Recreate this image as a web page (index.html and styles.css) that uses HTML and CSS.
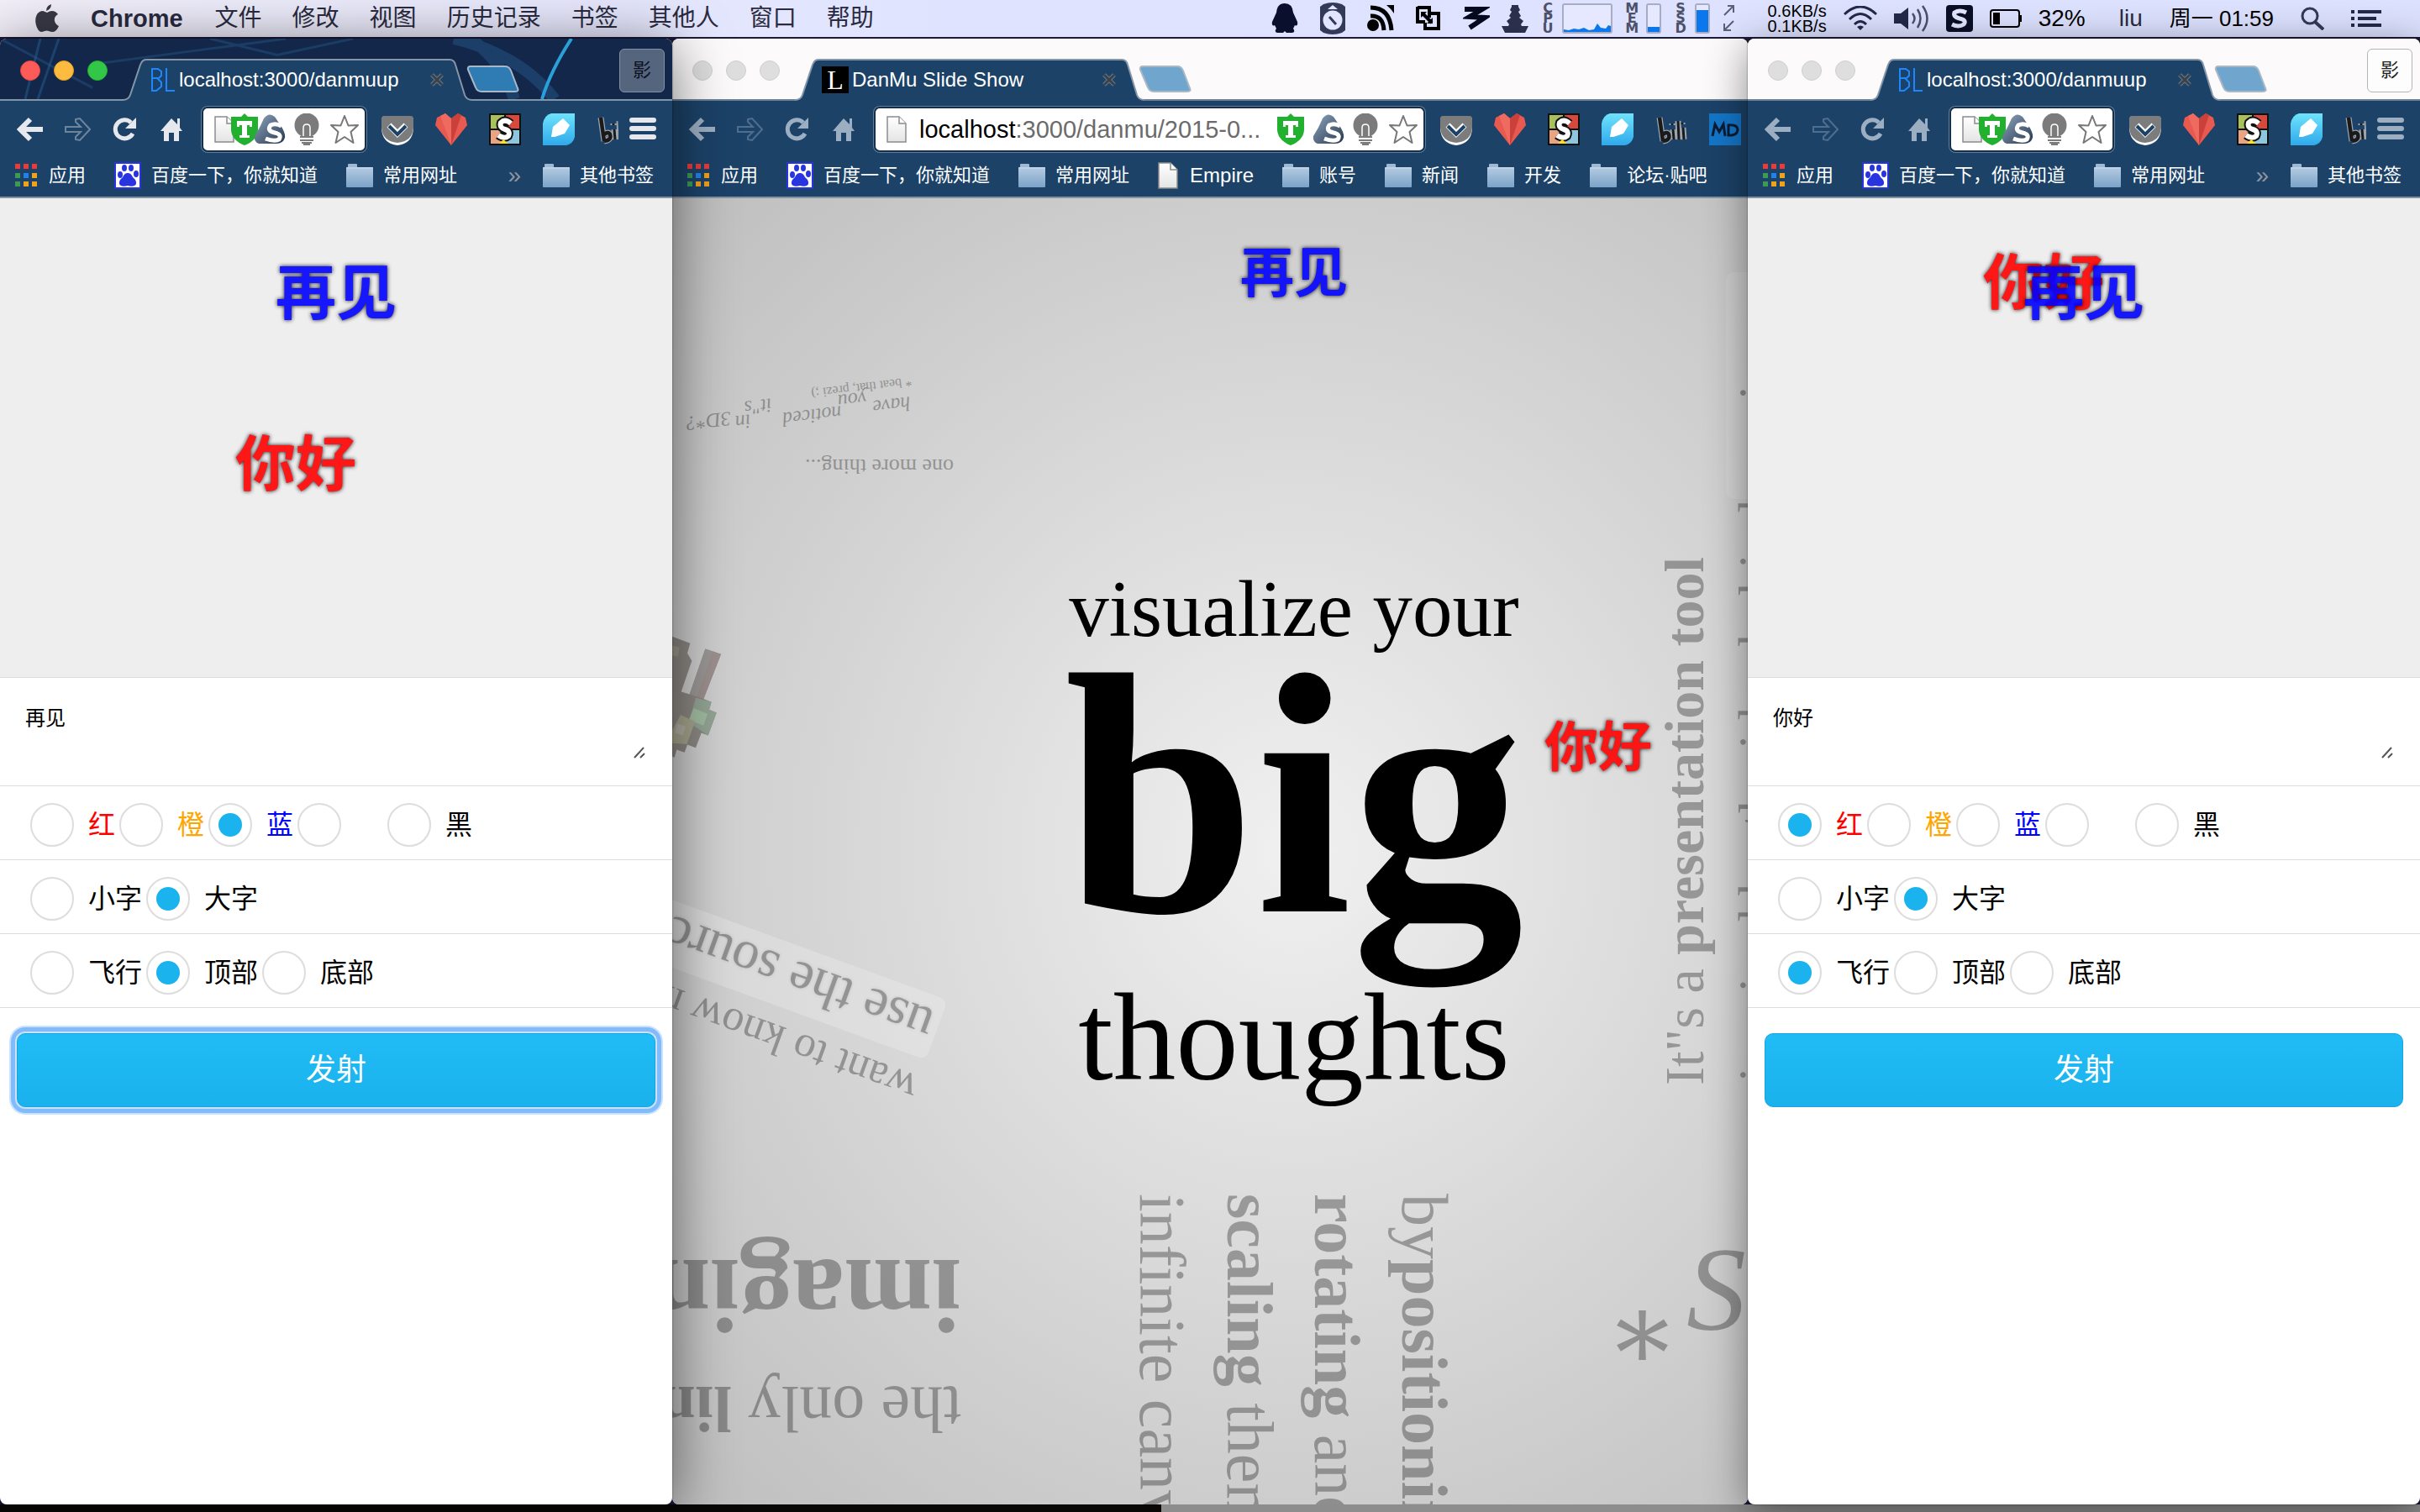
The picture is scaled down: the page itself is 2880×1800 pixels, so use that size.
FILE: index.html
```html
<!DOCTYPE html>
<html lang="zh-CN">
<head>
<meta charset="utf-8">
<title>DanMu Slide Show</title>
<link rel="stylesheet" href="styles.css">
</head>
<body>
<svg class="sprite" aria-hidden="true">
  <defs>
    <linearGradient id="folderFill" x1="0" y1="0" x2="0" y2="1"><stop offset="0" stop-color="#b4cbe2"/><stop offset="1" stop-color="#7ba3c8"/></linearGradient>
    <linearGradient id="featherFill" x1="0" y1="0" x2="0" y2="1"><stop offset="0" stop-color="#6fe3fb"/><stop offset="1" stop-color="#2fa9ec"/></linearGradient>
    <linearGradient id="sogouFill" x1="0" y1="0" x2="1" y2="1"><stop offset="0" stop-color="#8fa6bf"/><stop offset="1" stop-color="#26384e"/></linearGradient>
    <linearGradient id="pageFill" x1="0" y1="0" x2="0" y2="1"><stop offset="0" stop-color="#fff"/><stop offset="1" stop-color="#e4e4e4"/></linearGradient>
  </defs>
  <symbol id="tab" viewBox="0 0 416 50"><path d="M0 49C6 49 8 46 9 43L21 7C23 2 25 1 29 1H389C393 1 395 3 396 7L407 43C408 46 410 49 416 49V50H0Z" fill="#1c4268"/><path d="M0 49C6 49 8 46 9 43L21 7C23 2 25 1 29 1H389C393 1 395 3 396 7L407 43C408 46 410 49 416 49" fill="none" stroke="#8496a8" stroke-width="2"/></symbol>
  <symbol id="newtab" viewBox="0 0 64 32"><path d="M5 1H46Q51 1 53 6L61 27Q63 31 58 31H18Q13 31 11 26L2 5Q1 1 5 1Z" fill="currentColor" stroke="#a9b8c4" stroke-width="2"/></symbol>
  <symbol id="bl" viewBox="0 0 28 28"><path d="M1 1H8L12 4V9L8 13L12 17V22L6 27H1ZM1 12H8M18 0V27H28" fill="none" stroke="#1e86ff" stroke-width="2"/></symbol>
  <symbol id="close" viewBox="0 0 18 18"><path d="M3 3L15 15M15 3L3 15" stroke="#6d7a88" stroke-width="5"/><path d="M3 3L15 15M15 3L3 15" stroke="#39424c" stroke-width="3"/></symbol>
  <symbol id="back" viewBox="0 0 32 32"><path d="M16 4L4 16L16 28M5 16H31" fill="none" stroke="currentColor" stroke-width="6"/></symbol>
  <symbol id="fwd" viewBox="0 0 32 32"><path d="M14 4L19 3L31 16L19 29L14 28V25L20 19H2V13H20L14 7Z" fill="none" stroke="currentColor" stroke-width="2"/></symbol>
  <symbol id="reload" viewBox="0 0 32 32"><path d="M26 21A11 11 0 1 1 24 8" fill="none" stroke="currentColor" stroke-width="5"/><path d="M30 2V15H17Z" fill="currentColor"/></symbol>
  <symbol id="home" viewBox="0 0 32 32"><path d="M16 3L3 18H7V30H13V20H19V30H25V18H29L26 14V3H23V10Z" fill="currentColor"/></symbol>
  <symbol id="page" viewBox="0 0 24 32"><path d="M1 1H15L23 9V31H1Z" fill="url(#pageFill)" stroke="#8c8c8c" stroke-width="1.5"/><path d="M15 1V9H23" fill="#fff" stroke="#8c8c8c" stroke-width="1.5"/></symbol>
  <symbol id="shield" viewBox="0 0 36 38"><path d="M18 0L22 4H34V20Q33 32 18 38Q3 32 2 20V4H14Z" fill="#22b02f"/><path d="M9 9H27V16H24V14H21V26H24V29H12V26H15V14H12V16H9Z" fill="#fff"/></symbol>
  <symbol id="sogou" viewBox="0 0 38 38"><path d="M12 6Q18-2 25 4Q29 10 33 16Q38 24 37 29Q35 36 27 36H6Q0 34 1 27Q7 18 12 6Z" fill="url(#sogouFill)"/><path d="M33 15Q26 11 20 14Q15 21 25 23Q34 25 30 31Q24 34 14 30" fill="none" stroke="#fff" stroke-width="5"/></symbol>
  <symbol id="bulb" viewBox="0 0 30 38"><circle cx="15" cy="14" r="14.500" fill="#7b7b7b"/><path d="M11 28V17Q11 13 15 13Q19 13 19 17V28" fill="none" stroke="#fff" stroke-width="1.500"/><path d="M6 27H24V38H6Z" fill="#fff"/><path d="M7 28H23M7 32H23M9 35H21M11 37H19" stroke="#7b7b7b" stroke-width="2"/></symbol>
  <symbol id="star" viewBox="0 0 36 36"><path d="M18 2L22.500 13.500L34 13L25.500 21L28.500 34L18 27L7.500 34L10.500 21L2 13L13.500 13.500Z" fill="#fff" stroke="#777" stroke-width="2" stroke-linejoin="round"/></symbol>
  <symbol id="pocket" viewBox="0 0 38 38"><path d="M3 4H35Q38 4 38 8V18Q37 36 19 38Q1 36 0 18V8Q0 4 3 4Z" fill="#fff"/><path d="M3 3H35Q38 3 38 7V17Q37 33 19 35Q1 33 0 17V7Q0 3 3 3Z" fill="#7c7c7c"/><path d="M9 14L19 24L29 14" fill="none" stroke="#fff" stroke-width="7"/><path d="M9 15L19 25L29 15" fill="none" stroke="#1c4268" stroke-width="4"/></symbol>
  <symbol id="heart" viewBox="0 0 38 38"><path d="M19 6L12 0L2 5L0 14L19 38L38 14L36 5L27 0Z" fill="#e8594f"/><path d="M19 6L12 0L6 3L19 38Z" fill="#ef6a5f"/><path d="M19 6L27 0L31 2L19 38Z" fill="#cc403b"/></symbol>
  <symbol id="ssq" viewBox="0 0 38 38"><rect width="38" height="38" fill="#111"/><path d="M2 2H18V18H2Z" fill="#a9c15c"/><path d="M20 2H36V18H20Z" fill="#d8483c"/><path d="M2 20H18V36H2Z" fill="#e9a583"/><path d="M20 20H36V36H20Z" fill="#8fc6df"/><path d="M26 12Q19 6 14 11Q12 17 19 19Q26 21 23 27Q18 31 11 26" fill="none" stroke="#111" stroke-width="10"/><path d="M26 12Q19 6 14 11Q12 17 19 19Q26 21 23 27Q18 31 11 26" fill="none" stroke="#fff" stroke-width="6"/><path d="M12 36L17 31L23 36Z" fill="#ffdf20"/></symbol>
  <symbol id="feather" viewBox="0 0 38 38"><path d="M10 0H38V28Q36 36 28 38H0V12Q2 2 10 0Z" fill="url(#featherFill)"/><path d="M10 28L12 16L24 6L32 14L26 24L14 28Z" fill="#fff"/></symbol>
  <symbol id="bili" viewBox="0 0 38 38"><path d="M5 5L9 33M9 33Q18 32 16 25Q14 21 9 25M21 19L22 31M20 12V14M27 9L28 31M33 17L34 31M32 11V13" fill="none" stroke="#9aa5b0" stroke-width="7"/><path d="M5 5L9 33M9 33Q18 32 16 25Q14 21 9 25" fill="none" stroke="#1a1a1a" stroke-width="4.500"/><path d="M21 19L22 31M20 12V14M27 9L28 31M33 17L34 31M32 11V13" stroke="#1a1a1a" stroke-width="3"/></symbol>
  <symbol id="md" viewBox="0 0 38 38"><rect width="38" height="38" fill="#1476c8"/><path d="M4 27L7 13L12 22L17 13L19 27M23 14V26H27Q34 25 34 19Q33 13 23 14Z" fill="none" stroke="#0b1c33" stroke-width="3"/></symbol>
  <symbol id="burger" viewBox="0 0 32 32"><path d="M3 5H29M3 15H29M3 25H29" stroke="currentColor" stroke-width="6" stroke-linecap="round"/></symbol>
  <symbol id="apps" viewBox="0 0 26 28"><path d="M0 0H6V6H0ZM10 0H16V6H10ZM20 0H26V6H20Z" fill="#ee3a36"/><path d="M0 11H6V17H0ZM0 21H6V27H0Z" fill="#3c9a55"/><path d="M10 11H16V17H10Z" fill="#2482e6"/><path d="M20 11H26V17H20ZM10 21H16V27H10ZM20 21H26V27H20Z" fill="#efa11f"/></symbol>
  <symbol id="baidu" viewBox="0 0 32 32"><rect x="1" y="1" width="30" height="30" fill="#fff" stroke="#2a33e0" stroke-width="2"/><g fill="#2a33e0"><ellipse cx="7" cy="15" rx="3" ry="4"/><ellipse cx="12" cy="7" rx="3" ry="4"/><ellipse cx="20" cy="7" rx="3" ry="4"/><ellipse cx="26" cy="14" rx="3" ry="4"/><path d="M16 13Q20 13 22 18Q27 22 26 26Q24 30 16 28Q8 30 6 26Q5 22 10 18Q12 13 16 13Z"/></g></symbol>
  <symbol id="folder" viewBox="0 0 32 28"><path d="M2 4V1Q2 0 3 0H12Q13 0 13 1V4Z" fill="#9db9d4"/><rect y="4" width="32" height="24" rx="1" fill="url(#folderFill)"/><path d="M0 5H32" stroke="#c8d9ea" stroke-width="1"/></symbol>
</svg>

<header class="menubar">
  <nav class="menus" aria-label="菜单">
    <svg class="apple" viewBox="0 0 28 34"><path d="M19 0Q19 6 13 8Q13 2 19 0Z"/><path d="M14 10Q17 8 20 8Q24 8 27 12Q22 15 23 20Q24 24 28 26Q25 33 21 33Q18 33 16 32Q14 31 11 32Q9 33 7 33Q3 32 1 25Q-1 18 2 12Q5 8 9 8Q12 9 14 10Z"/></svg>
    <strong>Chrome</strong><span>文件</span><span>修改</span><span>视图</span><span>历史记录</span><span>书签</span><span>其他人</span><span>窗口</span><span>帮助</span>
  </nav>
  <div class="extras">
    <div class="apps-group">
      <svg width="32" height="36" viewBox="0 0 32 36"><path d="M16 0Q25 0 26 11L31 22Q32 28 28 26L26 30Q29 34 25 35H18L16 33L14 35H7Q3 34 6 30L4 26Q0 28 1 22L6 11Q7 0 16 0Z" fill="#0a0f2e"/></svg>
      <svg width="32" height="38" viewBox="0 0 32 38"><path d="M5 2Q16-2 27 2L31 5V33L27 36Q16 40 5 36L1 33V5Z" fill="#333a58"/><circle cx="16" cy="21" r="11.500" fill="#e2e5ff"/><path d="M10 8L16 3L22 8Z" fill="#e2e5ff"/><path d="M12 17L20 26" stroke="#333a58" stroke-width="3"/></svg>
      <svg width="32" height="34" viewBox="0 0 32 34"><circle cx="7" cy="25" r="7"/><path d="M4 14Q19 13 20 31M4 4Q27 4 29 31" fill="none" stroke="#000" stroke-width="5"/><path d="M23 1H32V11Q28 5 23 1Z"/></svg>
      <svg width="32" height="32" viewBox="0 0 32 32"><path d="M3 3H17V9M17 10H28V28H12V21M3 2V20H12M17 9V15" fill="none" stroke="#000" stroke-width="4"/><path d="M9 10L20 21" stroke="#000" stroke-width="4"/><path d="M7 8H14L7 15ZM21 15V22H14Z"/></svg>
      <svg width="32" height="30" viewBox="0 0 32 30"><path d="M2 4L23 4L8 13L26 14L8 26" fill="none" stroke="#05091f" stroke-width="6"/></svg>
    </div>
    <div class="stats">
      <svg width="32" height="36" viewBox="0 0 32 36"><path d="M12 2H20V4L22 8L20 10L23 15L21 17L26 21L23 25L24 27H32L28 35H4L0 27H8L9 25L6 21L11 17L9 15L12 10L10 8L12 4Z" fill="#2a2f4c"/></svg>
      <div class="meter"><b>C<br>P<br>U</b><svg width="60" height="36" viewBox="0 0 60 36"><rect x="1" y="1" width="58" height="34" rx="2" fill="#e6e8ff" stroke="#a9adc4" stroke-width="2"/><path d="M2 34V31L8 32L14 30L20 31L26 29L32 32L38 31L42 24L46 29L52 30L55 26L58 27V34Z" fill="#0a78ec"/></svg></div>
      <div class="meter"><b>M<br>E<br>M</b><svg width="18" height="36" viewBox="0 0 18 36"><rect x="1" y="1" width="16" height="34" rx="2" fill="#e6e8ff" stroke="#a9adc4" stroke-width="2"/><path d="M2 28H16V34H2Z" fill="#0a78ec"/></svg></div>
      <div class="meter"><b>S<br>S<br>D</b><svg width="18" height="36" viewBox="0 0 18 36"><rect x="1" y="1" width="16" height="34" rx="2" fill="#e6e8ff" stroke="#a9adc4" stroke-width="2"/><path d="M2 8H16V34H2Z" fill="#0a78ec"/></svg></div>
      <svg width="16" height="32" viewBox="0 0 16 32"><path d="M2 12L13 1M6 1H13V9M13 19L2 30M2 22V30H10" fill="none" stroke="#5a6078" stroke-width="2"/></svg>
    </div>
    <div class="speed">0.6KB/s<br>0.1KB/s</div>
    <div class="system">
      <svg width="40" height="30" viewBox="0 0 40 30"><path d="M1 10Q20-8 39 10M7 16Q20 3 33 16M13 22Q20 15 27 22" fill="none" stroke="#23294a" stroke-width="3"/><path d="M16 25Q20 22 24 25L20 29Z" fill="#23294a"/></svg>
      <svg width="42" height="32" viewBox="0 0 42 32"><path d="M0 10H8L17 3V29L8 22H0Z" fill="#23294a"/><path d="M22 10Q27 16 22 22M28 5Q35 16 28 27M34 1Q45 16 34 31" fill="none" stroke="#4a506c" stroke-width="2.500"/></svg>
      <svg width="32" height="32" viewBox="0 0 32 32"><rect width="32" height="32" rx="4" fill="#0b0f26"/><path d="M24 9Q16 5 10 9Q8 14 16 16Q25 18 21 23Q15 27 7 23" fill="none" stroke="#e4e6ff" stroke-width="5"/></svg>
      <svg width="38" height="22" viewBox="0 0 38 22"><rect x="1" y="1" width="34" height="20" rx="3" fill="none" stroke="#000" stroke-width="2"/><path d="M4 4H12V18H4Z"/><path d="M36 7H38V15H36Z"/></svg>
      <span>32%</span>
    </div>
    <div class="session">
      <span class="user">liu</span><span class="clock">周一 01:59</span>
      <svg width="28" height="28" viewBox="0 0 28 28"><circle cx="11" cy="11" r="9" fill="none" stroke="#333a58" stroke-width="3"/><path d="M17 18L27 27" stroke="#333a58" stroke-width="4"/></svg>
      <svg width="36" height="20" viewBox="0 0 36 20"><path d="M0 2H4M8 2H36M0 10H4M8 10H30M0 18H4M8 18H36" stroke="#23294a" stroke-width="4"/></svg>
    </div>
  </div>
</header>

<main class="desktop">
  <section class="window front active" aria-label="danmuup">
    <div class="tabstrip">
      <svg class="theme" viewBox="0 0 800 74" preserveAspectRatio="none"><g fill="none" stroke="#2a6ea3"><path d="M30 74L48 0M45 74L70 0" stroke-width="3" opacity=".4"/><path d="M120 30L340 0M250 0L330 20L420 0M0 0L110 60" stroke-width="3" opacity=".3"/><path d="M560 0Q600 30 612 74M540 0Q620 20 660 74" stroke-width="14" opacity=".35"/><path d="M680 0Q655 40 645 74" stroke="#2b9fd8" stroke-width="4"/></g></svg>
      <div class="lights"><i class="close-dot"></i><i class="min-dot"></i><i class="max-dot"></i></div>
      <div class="tab"><svg class="tab-shape"><use href="#tab"/></svg><svg class="bl"><use href="#bl"/></svg><span>localhost:3000/danmuup</span><svg class="x"><use href="#close"/></svg></div>
      <svg class="newtab"><use href="#newtab"/></svg>
      <button class="profile">影</button>
    </div>
    <div class="toolbar">
      <div class="nav"><svg><use href="#back"/></svg><svg class="dim"><use href="#fwd"/></svg><svg><use href="#reload"/></svg><svg><use href="#home"/></svg></div>
      <div class="omnibox compact"><svg class="page"><use href="#page"/></svg><span class="url"></span><svg class="shield"><use href="#shield"/></svg><svg class="sogou"><use href="#sogou"/></svg><svg class="bulb"><use href="#bulb"/></svg><svg class="star"><use href="#star"/></svg></div>
      <div class="exts clipped"><svg><use href="#pocket"/></svg><svg><use href="#heart"/></svg><svg><use href="#ssq"/></svg><svg><use href="#feather"/></svg><svg><use href="#bili"/></svg></div>
      <svg class="burger"><use href="#burger"/></svg>
    </div>
    <div class="bookmarks">
      <a href="#"><svg class="apps"><use href="#apps"/></svg>应用</a><a href="#"><svg class="baidu"><use href="#baidu"/></svg>百度一下，你就知道</a><a href="#"><svg class="folder"><use href="#folder"/></svg>常用网址</a>
      <span class="more">»</span><a href="#"><svg class="folder"><use href="#folder"/></svg>其他书签</a>
    </div>
    <div class="stage"><b class="shot blue big top">再见</b><b class="shot red big flying">你好</b></div>
    <form class="panel">
      <div class="message"><textarea aria-label="弹幕">再见</textarea><svg class="grip" viewBox="0 0 14 14"><path d="M1 13L12 1M8 13L13 8" stroke="#555" stroke-width="2"/></svg></div>
      <div class="row"><label class="red"><input type="radio" name="c1">红</label><label class="orange"><input type="radio" name="c1">橙</label><label class="blue"><input type="radio" name="c1" checked>蓝</label><label class="white"><input type="radio" name="c1" aria-label="白"></label><label><input type="radio" name="c1">黑</label></div>
      <div class="row"><label><input type="radio" name="s1">小字</label><label><input type="radio" name="s1" checked>大字</label></div>
      <div class="row"><label><input type="radio" name="p1">飞行</label><label><input type="radio" name="p1" checked>顶部</label><label><input type="radio" name="p1">底部</label></div>
      <button type="button" class="fire focused">发射</button>
    </form>
  </section>

  <section class="window" aria-label="DanMu Slide Show">
    <div class="tabstrip">
      <div class="lights"><i></i><i></i><i></i></div>
      <div class="tab"><svg class="tab-shape"><use href="#tab"/></svg><b class="favicon">L</b><span>DanMu Slide Show</span><svg class="x"><use href="#close"/></svg></div>
      <svg class="newtab"><use href="#newtab"/></svg>
    </div>
    <div class="toolbar wide">
      <div class="nav"><svg><use href="#back"/></svg><svg class="dim"><use href="#fwd"/></svg><svg><use href="#reload"/></svg><svg><use href="#home"/></svg></div>
      <div class="omnibox"><svg class="page"><use href="#page"/></svg><span class="url"><em>localhost</em>:3000/danmu/2015-0...</span><svg class="shield"><use href="#shield"/></svg><svg class="sogou"><use href="#sogou"/></svg><svg class="bulb"><use href="#bulb"/></svg><svg class="star"><use href="#star"/></svg></div>
      <div class="exts"><svg><use href="#pocket"/></svg><svg><use href="#heart"/></svg><svg><use href="#ssq"/></svg><svg><use href="#feather"/></svg><svg><use href="#bili"/></svg><svg><use href="#md"/></svg></div>
    </div>
    <div class="bookmarks">
      <a href="#"><svg class="apps"><use href="#apps"/></svg>应用</a><a href="#"><svg class="baidu"><use href="#baidu"/></svg>百度一下，你就知道</a><a href="#"><svg class="folder"><use href="#folder"/></svg>常用网址</a><a href="#" class="latin"><svg class="page"><use href="#page"/></svg>Empire</a><a href="#"><svg class="folder"><use href="#folder"/></svg>账号</a><a href="#"><svg class="folder"><use href="#folder"/></svg>新闻</a><a href="#"><svg class="folder"><use href="#folder"/></svg>开发</a><a href="#"><svg class="folder"><use href="#folder"/></svg>论坛·贴吧</a>
    </div>
    <div class="slides">
      <p class="step beat">* beat that, prezi ;)</p>
      <p class="step word have">have</p><p class="step word you">you</p><p class="step word noticed">noticed</p><p class="step word its">it"s</p><p class="step word in">in</p><p class="step word three">3D*?</p>
      <p class="step thing">one more thing...</p>
      <svg class="step sprite-art" viewBox="0 580 180 240" preserveAspectRatio="none"><path d="M0 583L64 596L54 615L70 630L32 690L62 695L118 607L174 617L112 704L140 710L132 725L158 731L128 775L104 770L84 799L54 793L44 808L16 803L8 818L0 816Z" fill="#76706a"/><path d="M118 607L146 612L90 700L62 695Z" fill="#8a8484"/><path d="M146 612L174 617L112 704L90 700Z" fill="#8c7c7a"/><path d="M84 702L140 710L132 725L158 731L128 775L60 750Z" fill="#7f9680"/><path d="M76 722L126 733L112 756L60 745Z" fill="#93b592"/><path d="M0 765L30 735L82 748L52 792L0 790Z" fill="#98987a"/><path d="M18 752L48 758L38 775L10 770Z" fill="#aaa79b"/><path d="M0 600L26 604L20 622L0 620Z" fill="#8c8877"/></svg>
      <p class="step source">use the source, Luke!</p>
      <p class="step know">want to know more?</p>
      <p class="step imagination"><b>imagination</b></p>
      <p class="step only">the only <b>limit</b></p>
      <p class="step canvas">by<b>positioning</b><br><b>rotating</b> and<br><b>scaling</b> them<br>infinite canvas</p>
      <p class="step tool">It"s a <b>presentation tool</b></p>
      <p class="step idea">inspired by the idea behind</p>
      <p class="step prezi">prezi.com</p>
      <p class="step letter">S</p><p class="step asterisk">*</p>
      <div class="step headline"><p class="visualize">visualize your</p><p class="huge">big</p><p class="thoughts">thoughts</p></div>
      <b class="shot blue top">再见</b><b class="shot red flying">你好</b>
    </div>
  </section>

  <section class="window front" aria-label="danmuup">
    <div class="tabstrip">
      <div class="lights"><i></i><i></i><i></i></div>
      <div class="tab"><svg class="tab-shape"><use href="#tab"/></svg><svg class="bl"><use href="#bl"/></svg><span>localhost:3000/danmuup</span><svg class="x"><use href="#close"/></svg></div>
      <svg class="newtab"><use href="#newtab"/></svg>
      <button class="profile">影</button>
    </div>
    <div class="toolbar">
      <div class="nav"><svg><use href="#back"/></svg><svg class="dim"><use href="#fwd"/></svg><svg><use href="#reload"/></svg><svg><use href="#home"/></svg></div>
      <div class="omnibox compact"><svg class="page"><use href="#page"/></svg><span class="url"></span><svg class="shield"><use href="#shield"/></svg><svg class="sogou"><use href="#sogou"/></svg><svg class="bulb"><use href="#bulb"/></svg><svg class="star"><use href="#star"/></svg></div>
      <div class="exts clipped"><svg><use href="#pocket"/></svg><svg><use href="#heart"/></svg><svg><use href="#ssq"/></svg><svg><use href="#feather"/></svg><svg><use href="#bili"/></svg></div>
      <svg class="burger"><use href="#burger"/></svg>
    </div>
    <div class="bookmarks">
      <a href="#"><svg class="apps"><use href="#apps"/></svg>应用</a><a href="#"><svg class="baidu"><use href="#baidu"/></svg>百度一下，你就知道</a><a href="#"><svg class="folder"><use href="#folder"/></svg>常用网址</a>
      <span class="more">»</span><a href="#"><svg class="folder"><use href="#folder"/></svg>其他书签</a>
    </div>
    <div class="stage"><b class="shot red big flying high">你好</b><b class="shot blue big top">再见</b></div>
    <form class="panel">
      <div class="message"><textarea aria-label="弹幕">你好</textarea><svg class="grip" viewBox="0 0 14 14"><path d="M1 13L12 1M8 13L13 8" stroke="#555" stroke-width="2"/></svg></div>
      <div class="row"><label class="red"><input type="radio" name="c2" checked>红</label><label class="orange"><input type="radio" name="c2">橙</label><label class="blue"><input type="radio" name="c2">蓝</label><label class="white"><input type="radio" name="c2" aria-label="白"></label><label><input type="radio" name="c2">黑</label></div>
      <div class="row"><label><input type="radio" name="s2">小字</label><label><input type="radio" name="s2" checked>大字</label></div>
      <div class="row"><label><input type="radio" name="p2" checked>飞行</label><label><input type="radio" name="p2">顶部</label><label><input type="radio" name="p2">底部</label></div>
      <button type="button" class="fire">发射</button>
    </form>
  </section>
</main>
<div class="behind"></div>
</body>
</html>
```

FILE: styles.css
```css
* { box-sizing: border-box; }
body {
  margin: 0;
  height: 100vh;
  display: flex;
  flex-direction: column;
  overflow: hidden;
  background: #1b1a38;
  font-family: "Liberation Sans", "Noto Sans CJK SC", sans-serif;
}
p { margin: 0; }
button, textarea { font-family: inherit; }
svg { flex: none; display: block; }
.sprite { position: absolute; width: 0; height: 0; }

/* menu bar */
.menubar {
  height: 44px;
  flex: none;
  display: flex;
  align-items: center;
  justify-content: space-between;
  padding: 0 46px 0 42px;
  background: linear-gradient(90deg, #f3f0fa, #dfe3ff 40%, #dce1fe);
  color: #2a2b40;
  font-size: 28px;
  line-height: 40px;
  white-space: nowrap;
}
.menus { display: flex; align-items: center; gap: 36px; }
.menus strong { margin: 0 2px; font-size: 29px; }
.apple { width: 28px; height: 34px; fill: #3a3a48; }
.extras, .apps-group, .stats, .system, .session, .meter { display: flex; align-items: center; }
.apps-group { gap: 25px; margin-right: 14px; }
.stats { gap: 15px; margin-right: 38px; }
.meter { gap: 8px; }
.meter b {
  width: 17px;
  font: bold 16px/12px "DejaVu Sans", sans-serif;
  text-align: center;
  color: #4c5068;
}
.speed { font-size: 20px; line-height: 18px; margin-right: 20px; color: #000; }
.system { gap: 20px; margin-right: 40px; color: #000; }
.session { gap: 32px; }
.clock { font-size: 26px; color: #000; }

/* windows */
.desktop {
  flex: 1;
  min-height: 0;
  margin-top: 2px;
  display: grid;
  grid-template-columns: 5fr 8fr 5fr;
}
.window {
  min-width: 0;
  display: flex;
  flex-direction: column;
  overflow: hidden;
  border-radius: 8px;
  background: #fff;
}
.front { position: relative; z-index: 1; box-shadow: 0 0 2px rgba(0, 0, 0, .6), 0 10px 50px rgba(0, 0, 0, .45); }
.active { box-shadow: 0 0 2px rgba(0, 0, 0, .6), 0 10px 70px rgba(0, 0, 0, .55); }
.behind {
  height: 9px;
  flex: none;
  background: linear-gradient(90deg, #0a0806 48%, #8d8d8d 48%);
}

.tabstrip {
  position: relative;
  height: 74px;
  flex: none;
  display: flex;
  align-items: flex-end;
  padding-left: 24px;
  background: linear-gradient(#fcfafb 72px, #6f8296 72px);
}
.active .tabstrip { background: linear-gradient(#13274b 72px, #8195a9 72px); }
.theme { position: absolute; left: 0; top: 0; width: 100%; height: 72px; }
.lights { position: relative; display: flex; gap: 16px; margin: 0 18px 24px 0; }
.lights i { width: 24px; height: 24px; border-radius: 50%; background: #dedede; border: 1px solid #cfcfcf; }
.lights .close-dot { background: #fc5b57; border-color: #e2463f; }
.lights .min-dot { background: #fdbc40; border-color: #dfa023; }
.lights .max-dot { background: #33c748; border-color: #27aa35; }
.tab {
  position: relative;
  width: 416px;
  height: 50px;
  flex: none;
  display: flex;
  align-items: center;
  padding: 0 33px 0 34px;
  color: #fff;
  font-size: 24px;
  white-space: nowrap;
}
.tab > * { position: relative; }
.tab .tab-shape { position: absolute; left: 0; top: 0; width: 416px; height: 50px; }
.bl { width: 28px; height: 28px; margin-right: 5px; }
.x { width: 18px; height: 18px; margin-left: auto; }
.favicon {
  width: 32px;
  height: 32px;
  margin: 0 4px 0 -2px;
  background: #000;
  font: 32px/32px "Liberation Serif", serif;
  text-align: center;
}
.newtab { position: relative; width: 64px; height: 32px; margin: 0 0 10px -7px; color: #70a6cd; }
.active .newtab { color: #2f7cb5; }
.profile {
  position: relative;
  width: 54px;
  height: 52px;
  margin: 0 9px 10px auto;
  border: 1px solid #b5b5b5;
  border-radius: 6px;
  background: #fdfdfd;
  color: #222;
  font-size: 22px;
  line-height: 50px;
  padding: 0;
}
.active .profile { background: #56657e; border-color: #8290a3; color: #0b1120; }

.toolbar {
  height: 68px;
  flex: none;
  display: flex;
  align-items: center;
  padding: 0 19px 0 20px;
  background: #1c4268;
  color: #9caec2;
}
.wide { padding-right: 8px; }
.active .toolbar { color: #e6e8ee; }
.nav { display: flex; gap: 24px; margin-right: 20px; }
.nav svg, .burger { width: 32px; height: 32px; }
.nav .dim { opacity: .4; }
.omnibox {
  flex: 1;
  min-width: 0;
  height: 54px;
  display: flex;
  align-items: center;
  padding: 0 6px 0 13px;
  border: 2px solid #14304d;
  border-radius: 7px;
  background: #fff;
  box-shadow: 0 0 0 1px #5f7c98;
  margin-right: 18px;
}
.page { width: 24px; height: 32px; }
.url { flex: 1; padding-left: 15px; font-size: 29px; white-space: nowrap; color: #6b6b6b; }
.url em { font-style: normal; color: #000; }
.shield { width: 36px; height: 38px; margin-right: 8px; }
.sogou { width: 38px; height: 38px; margin-right: 10px; }
.bulb { width: 30px; height: 38px; margin-right: 12px; }
.star { width: 36px; height: 36px; }
.compact .url { padding: 0; }
.compact .page, .compact .shield { margin-right: -7px; }
.exts { display: flex; gap: 26px; overflow: hidden; }
.exts svg { width: 38px; height: 38px; }
.clipped { width: 282px; margin-right: 13px; }

.bookmarks {
  height: 48px;
  flex: none;
  display: flex;
  align-items: center;
  gap: 34px;
  padding: 0 22px 4px 18px;
  border-bottom: 2px solid #8493a3;
  background: #1c4268;
  font-size: 22px;
  line-height: 32px;
  white-space: nowrap;
}
.bookmarks a { display: flex; align-items: center; gap: 12px; color: #fff; text-decoration: none; }
.bookmarks .latin { font-size: 24px; gap: 14px; }
.apps { width: 26px; height: 28px; margin-right: 2px; }
.baidu { width: 32px; height: 32px; }
.folder { width: 32px; height: 28px; }
.more { margin-left: auto; margin-right: -8px; color: #8f979f; font-size: 28px; }

/* flying comments */
.shot {
  position: absolute;
  font: bold 64px/80px "Liberation Sans", "Noto Sans CJK SC", sans-serif;
  white-space: nowrap;
  opacity: .9;
  text-shadow: 0 0 5px #000;
}
.big { font-size: 72px; }
.red { color: #f00; }
.orange { color: orange; }
.blue { color: #00f; }

.stage { position: relative; height: 570px; flex: none; background: #eee; }
.stage .top { left: 41%; top: 73px; }
.stage .flying { left: 35%; top: 277px; }
.stage .high { top: 61px; }

/* send form */
.panel { display: flex; flex-direction: column; border-top: 1px solid #ddd; }
.message { position: relative; padding: 30px; border-bottom: 1px solid #ddd; }
.message textarea {
  display: block;
  width: 100%;
  height: 68px;
  padding: 0;
  border: 0;
  outline: 0;
  resize: none;
  color: #000;
  font-size: 24px;
  line-height: 36px;
}
.grip { position: absolute; right: 32px; bottom: 32px; width: 14px; height: 14px; }
.row {
  height: 88px;
  display: flex;
  align-items: center;
  gap: 5px;
  padding: 4px 36px 0;
  border-bottom: 1px solid #ddd;
  font-size: 32px;
  line-height: 48px;
}
.row label { display: flex; align-items: center; gap: 17px; }
.row .white { padding-right: 50px; }
.row input {
  appearance: none;
  width: 52px;
  height: 52px;
  margin: 0;
  display: grid;
  place-items: center;
  border: 2px solid #ddd;
  border-radius: 50%;
  background: #fff;
}
.row input:checked::before { content: ""; width: 28px; height: 28px; border-radius: 50%; background: #1ab3ee; }
.fire {
  height: 88px;
  margin: 30px 20px;
  border: 1px solid #17a5dd;
  border-radius: 10px;
  background: linear-gradient(#21bbf6, #19b2ed);
  color: #fff;
  font-size: 36px;
  line-height: 48px;
}
.focused { box-shadow: 0 0 0 2px #c9e2fe, 0 0 0 7px #81bbfb, 0 0 0 9px #c9e2fe; }

/* slide canvas: every step has its own place and turn */
.slides {
  position: relative;
  flex: 1;
  min-height: 0;
  overflow: hidden;
  background: radial-gradient(82% 71% at 740px 50%, #f0f0f0, #bebebe);
  font-family: "Liberation Serif", serif;
  color: #000;
}
.step {
  position: absolute;
  transform-origin: 0 0;
  line-height: 1;
  white-space: nowrap;
  opacity: .3;
}
.headline { left: 440px; top: 429px; width: 600px; text-align: center; opacity: 1; }
.visualize { font-size: 95px; line-height: 120px; }
.huge { font-size: 410px; line-height: 324px; font-weight: bold; }
.thoughts { margin-top: 52px; font-size: 149px; line-height: 148px; }
.beat { left: 286px; top: 226px; font-size: 16px; transform: rotate(173deg); }
.word { font-size: 24px; font-style: italic; transform: rotate(173deg); }
.have { left: 285px; top: 256px; }
.you { left: 233px; top: 250px; }
.noticed { left: 203px; top: 267px; }
.its { left: 120px; top: 258px; }
.in { left: 95px; top: 277px; }
.three { left: 71px; top: 274px; }
.thing { left: 335px; top: 332px; font-size: 26px; transform: rotate(180deg); }
.sprite-art { left: 0; top: 520px; width: 60px; height: 147px; opacity: .75; }
.source {
  left: 302px;
  top: 1026px;
  padding: 0 8px;
  border-radius: 10px;
  background: rgba(255, 255, 255, .7);
  font-size: 64px;
  line-height: 76px;
  text-shadow: 0 0 4px rgba(0, 0, 0, .4);
  transform: rotate(200deg);
}
.know { left: 279px; top: 1090px; font-size: 52px; line-height: 60px; transform: rotate(200deg); }
.imagination { left: 344px; top: 1368px; font-size: 125px; transform: rotate(180deg); }
.only { left: 344px; top: 1480px; font-size: 78px; transform: rotate(180deg); }
.canvas { left: 947px; top: 1185px; font-size: 78px; line-height: 104px; transform: rotate(90deg); }
.tool { left: 1172px; top: 1056px; font-size: 66px; transform: rotate(-90deg); }
.idea { left: 1260px; top: 1052px; font-size: 64px; transform: rotate(-90deg); }
.prezi {
  left: 1254px;
  top: 358px;
  padding: 6px 8px;
  border-radius: 10px;
  background: rgba(255, 255, 255, .4);
  font-size: 64px;
  transform: rotate(-90deg);
}
.letter { left: 1207px; top: 1228px; font-size: 142px; font-style: italic; }
.asterisk { left: 1122px; top: 1310px; font-family: "DejaVu Serif", serif; font-size: 130px; }
.slides .top { left: 676px; top: 49px; }
.slides .flying { left: 1038px; top: 614px; }
```
